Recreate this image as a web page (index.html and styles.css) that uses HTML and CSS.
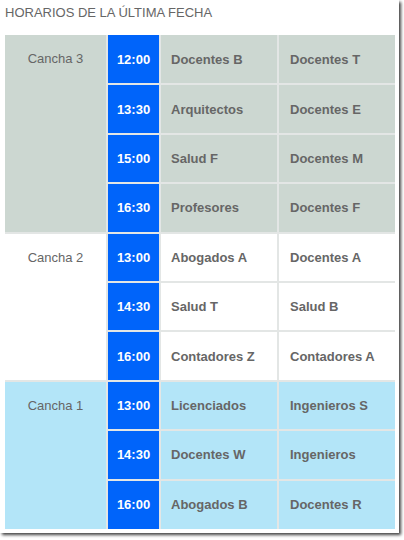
FILE: index.html
```html
<!DOCTYPE html>
<html lang="es">
<head>
<meta charset="utf-8">
<title>Horarios</title>
<link rel="stylesheet" href="styles.css">
</head>
<body>
<div class="frame">
  <h2 class="title">HORARIOS DE LA ÚLTIMA FECHA</h2>
  <table class="schedule">
    <colgroup>
      <col class="c-court"><col class="c-time"><col class="c-team"><col class="c-team2">
    </colgroup>
    <tbody class="g-grey">
      <tr><td class="court" rowspan="4">Cancha 3</td><td class="time">12:00</td><td class="team">Docentes B</td><td class="team t2">Docentes T</td></tr>
      <tr><td class="time">13:30</td><td class="team">Arquitectos</td><td class="team t2">Docentes E</td></tr>
      <tr><td class="time">15:00</td><td class="team">Salud F</td><td class="team t2">Docentes M</td></tr>
      <tr><td class="time">16:30</td><td class="team">Profesores</td><td class="team t2">Docentes F</td></tr>
    </tbody>
    <tbody class="g-white">
      <tr><td class="court" rowspan="3">Cancha 2</td><td class="time">13:00</td><td class="team">Abogados A</td><td class="team t2">Docentes A</td></tr>
      <tr><td class="time">14:30</td><td class="team">Salud T</td><td class="team t2">Salud B</td></tr>
      <tr><td class="time">16:00</td><td class="team">Contadores Z</td><td class="team t2">Contadores A</td></tr>
    </tbody>
    <tbody class="g-blue">
      <tr><td class="court" rowspan="3">Cancha 1</td><td class="time">13:00</td><td class="team">Licenciados</td><td class="team t2">Ingenieros S</td></tr>
      <tr><td class="time">14:30</td><td class="team">Docentes W</td><td class="team t2">Ingenieros</td></tr>
      <tr><td class="time">16:00</td><td class="team">Abogados B</td><td class="team t2">Docentes R</td></tr>
    </tbody>
  </table>
</div>
</body>
</html>
```

FILE: styles.css
```css
html, body {
  margin: 0;
  padding: 0;
  background: #ffffff;
}
body {
  width: 404px;
  height: 540px;
  overflow: hidden;
  font-family: "Liberation Sans", Arial, sans-serif;
}
.frame {
  box-sizing: border-box;
  width: 399px;
  height: 533px;
  background: #ffffff;
  padding: 5px 0 0 5px;
  box-shadow: 2px 2px 3px rgba(0, 0, 0, 0.75);
}
.title {
  margin: 0 0 14px 0;
  font-size: 13px;
  line-height: 16px;
  font-weight: normal;
  color: #666666;
}
.schedule {
  table-layout: fixed;
  border-collapse: collapse;
  border-style: hidden;
  width: 390px;
  font-size: 13px;
  line-height: 15px;
  color: #666666;
}
.c-court { width: 102px; }
.c-time { width: 53px; }
.c-team { width: 118px; }
.c-team2 { width: 117px; }
.schedule td {
  border: 2px solid #e3e6e5;
  padding: 0;
}
.schedule tr {
  height: 49.4px;
}
.g-grey td { background: #ccd7d1; }
.g-white td { background: #ffffff; }
.g-blue td { background: #b3e5f8; }
.g-grey tr:first-child td, .g-blue tr:first-child td, .g-white tr:first-child td {
  border-top-color: #eeeeee;
}
.schedule .court {
  vertical-align: top;
  text-align: center;
  padding-top: 16px;
  font-weight: normal;
}
.schedule .time {
  background: #0064fa;
  color: #ffffff;
  font-weight: bold;
  text-align: center;
}
.team {
  font-weight: bold;
  padding-left: 10px !important;
}
.team.t2 {
  padding-left: 11px !important;
}
```
